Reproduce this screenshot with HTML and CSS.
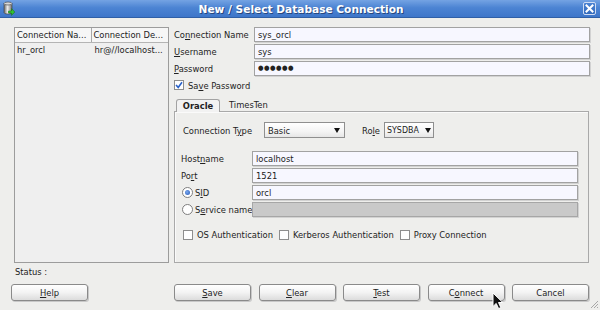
FILE: index.html
```html
<!DOCTYPE html>
<html>
<head>
<meta charset="utf-8">
<link rel="stylesheet" href="styles.css">
</head>
<body>
<div class="win">
  <div class="titlebar">
    <svg class="ticon" width="12" height="15" viewBox="0 0 12 15">
      <defs>
        <linearGradient id="cyl" x1="0" x2="1" y1="0" y2="0">
          <stop offset="0" stop-color="#6a6a6a"/>
          <stop offset="0.45" stop-color="#ececec"/>
          <stop offset="1" stop-color="#6e6e6e"/>
        </linearGradient>
      </defs>
      <path d="M1 2.5 V11.5 A4 1.5 0 0 0 9 11.5 V2.5 Z" fill="url(#cyl)" stroke="#3a3a3a" stroke-width="0.6"/>
      <ellipse cx="5" cy="2.5" rx="4" ry="1.5" fill="#d8d8d8" stroke="#3a3a3a" stroke-width="0.6"/>
      <path d="M5.5 10 H8.5 V7.6 L11.8 11 L8.5 14.4 V12 H5.5 Z" fill="#35c235" stroke="#0c6a0c" stroke-width="0.5"/>
    </svg>
    <div class="title">New / Select Database Connection</div>
    <div class="close">
      <svg width="9" height="9" viewBox="0 0 9 9"><path d="M1.5 1.5 L7.5 7.5 M7.5 1.5 L1.5 7.5" stroke="#fff" stroke-width="2" stroke-linecap="square"/></svg>
    </div>
  </div>

  <div class="content">
    <div class="main">
      <div class="list">
        <div class="lhead">
          <div class="lc c1">Connection Na...</div>
          <div class="lc c2">Connection De...</div>
        </div>
        <div class="lrow">
          <div class="lc c1">hr_orcl</div>
          <div class="lc c2">hr@//localhost...</div>
        </div>
      </div>

      <div class="form">
        <div class="frow"><span class="flabel">Co<u>n</u>nection Name</span><div class="input">sys_orcl</div></div>
        <div class="frow"><span class="flabel"><u>U</u>sername</span><div class="input">sys</div></div>
        <div class="frow"><span class="flabel"><u>P</u>assword</span><div class="input pw">&#9679;&#9679;&#9679;&#9679;&#9679;&#9679;</div></div>
        <div class="saverow">
          <span class="cb checked"><svg width="8" height="8" viewBox="0 0 8 8"><path d="M1 4 L3.2 6.4 L7 1.2" fill="none" stroke="#2a62c8" stroke-width="1.6"/></svg></span>
          <span>Sa<u>v</u>e Password</span>
        </div>
        <div class="tabs">
          <div class="tab active">Oracle</div>
          <div class="tab">TimesTen</div>
        </div>
        <div class="panel">
          <div class="typerow">
            <span class="typelabel">Connection T<u>y</u>pe</span>
            <div class="select sel-basic"><span>Basic</span><span class="tri"></span></div>
            <span class="rolelabel">Ro<u>l</u>e</span>
            <div class="select sel-role"><span>SYSDBA</span><span class="tri"></span></div>
          </div>
          <div class="hostgrid">
            <div class="hrow"><span class="hlabel">Host<u>n</u>ame</span><div class="input hin">localhost</div></div>
            <div class="hrow"><span class="hlabel">Po<u>r</u>t</span><div class="input hin">1521</div></div>
            <div class="hrow"><span class="hlabel rlabel"><span class="radio on"></span><span>S<u>I</u>D</span></span><div class="input hin">orcl</div></div>
            <div class="hrow"><span class="hlabel rlabel"><span class="radio"></span><span>S<u>e</u>rvice name</span></span><div class="input hin disabled"></div></div>
          </div>
          <div class="authrow">
            <span class="cb"></span><span class="atext">OS Authentication</span>
            <span class="cb"></span><span class="atext">Kerberos Authentication</span>
            <span class="cb"></span><span class="atext">Proxy Connection</span>
          </div>
        </div>
      </div>
    </div>

    <div class="status">Status :</div>

    <div class="buttons">
      <div class="btn"><span><u>H</u>elp</span></div>
      <div class="btngroup">
        <div class="btn"><span><u>S</u>ave</span></div>
        <div class="btn"><span><u>C</u>lear</span></div>
        <div class="btn"><span><u>T</u>est</span></div>
        <div class="btn"><span>C<u>o</u>nnect</span></div>
        <div class="btn"><span>Cancel</span></div>
      </div>
    </div>
  </div>

  <svg class="cursor" width="13" height="18" viewBox="0 0 13 18">
    <path d="M1 1 L1 14.5 L4.2 11.4 L6.6 16.6 L8.8 15.6 L6.5 10.5 L10.8 10.5 Z" fill="#111" stroke="#fff" stroke-width="1"/>
  </svg>
  <svg class="grip" width="10" height="10" viewBox="0 0 10 10">
    <path d="M9 2 L2 9 M9 5 L5 9 M9 8 L8 9" stroke="#a8a8a8" stroke-width="1"/>
  </svg>
</div>
</body>
</html>
```

FILE: styles.css
```css
* { box-sizing: border-box; }
html, body { margin: 0; padding: 0; }
body {
  width: 600px;
  height: 310px;
  overflow: hidden;
  background: #eeeeec;
  font-family: "DejaVu Sans Condensed", "Liberation Sans", sans-serif;
  font-size: 9.3px;
  color: #222;
}
u { text-decoration: underline; text-underline-offset: 1px; }

.win {
  position: relative;
  width: 600px;
  height: 310px;
  display: flex;
  flex-direction: column;
}

/* title bar */
.titlebar {
  height: 18px;
  flex: none;
  display: flex;
  align-items: center;
  background: linear-gradient(#74a3e3, #4c84d3 45%, #3e76c9);
  border-bottom: 1px solid #2f5fa6;
}
.ticon { margin-left: 3px; flex: none; }
.title {
  flex: 1;
  text-align: center;
  color: #fff;
  font-family: "DejaVu Sans", sans-serif;
  font-weight: bold;
  font-size: 10.6px;
  text-shadow: 1px 1px 0 #27477e;
  padding-left: 4px;
}
.close {
  flex: none;
  width: 13px;
  height: 13px;
  margin-right: 4px;
  border: 1px solid #cfdcf3;
  border-radius: 2px;
  background: linear-gradient(#4a82d2, #336bbd);
  display: flex;
  align-items: center;
  justify-content: center;
}

/* content */
.content { flex: 1; display: flex; flex-direction: column; }
.main {
  display: flex;
  height: 236px;
  margin-top: 9px;
}
.list {
  margin-left: 14px;
  width: 155px;
  border: 1px solid #9c9c9c;
  background: #efefef;
}
.lhead {
  display: flex;
  height: 15px;
  background: #f6f6f6;
  border-bottom: 1px solid #b4b4b4;
}
.lrow { display: flex; height: 14px; }
.lc {
  width: 77px;
  padding-left: 2px;
  white-space: nowrap;
  overflow: hidden;
  line-height: 14px;
}
.lhead .c1 { border-right: 1px solid #a8a8a8; }
.lrow .c2 { padding-left: 3px; }

.form {
  margin-left: 4px;
  width: 417px;
  display: flex;
  flex-direction: column;
}
.frow {
  display: flex;
  align-items: center;
  height: 15px;
  margin-bottom: 2px;
}
.flabel { width: 81px; padding-left: 1px; white-space: nowrap; }
.input {
  flex: 1;
  height: 15px;
  background: #f7f7ff;
  border: 1px solid #a2a2a2;
  box-shadow: 1px 1px 0 #d2d2d2;
  padding-left: 3px;
  line-height: 13px;
  white-space: nowrap;
}
.pw { font-size: 7px; letter-spacing: 0.5px; line-height: 13px; }

.saverow {
  display: flex;
  align-items: center;
  gap: 4px;
  height: 12px;
  margin-top: 1px;
  padding-left: 1px;
}
.cb {
  flex: none;
  width: 10px;
  height: 10px;
  border: 1px solid #8e8e8e;
  background: #fff;
  display: flex;
  align-items: center;
  justify-content: center;
}

/* tabs */
.tabs {
  display: flex;
  height: 12px;
  margin-top: 8px;
  padding-left: 3px;
  position: relative;
  z-index: 1;
}
.tab { padding: 0 9px; line-height: 12px; }
.tab.active {
  width: 44px;
  height: 13px;
  padding: 0;
  text-align: center;
  font-weight: bold;
  border: 1px solid #a2a2a2;
  border-bottom: none;
  border-radius: 3px 3px 0 0;
  background: #f2f2f2;
  line-height: 11px;
}
.panel {
  flex: 1;
  margin: 0 1px 0 1px;
  border: 1px solid #a9a9a9;
  box-shadow: inset 1px 1px 0 #fafafa;
  padding: 10px 0 0 8px;
}
.typerow { display: flex; align-items: center; height: 16px; }
.typelabel { width: 81px; white-space: nowrap; }
.select {
  height: 16px;
  border: 1px solid #8f8f8f;
  background: linear-gradient(#ffffff, #f4f4f4 60%, #e6e6e6);
  display: flex;
  align-items: center;
  justify-content: space-between;
  padding: 0 4px 0 3px;
}
.sel-basic { width: 81px; }
.sel-role { width: 50px; padding: 0 2px 0 2px; font-size: 8.8px; }
.tri {
  width: 0;
  height: 0;
  border-left: 3.5px solid transparent;
  border-right: 3.5px solid transparent;
  border-top: 5px solid #111;
}
.rolelabel { margin: 0 4px 0 17px; }

.hostgrid { margin-top: 13px; margin-left: -2px; }
.hrow {
  display: flex;
  align-items: center;
  height: 15px;
  margin-bottom: 2px;
}
.hlabel { width: 71px; white-space: nowrap; }
.rlabel { display: flex; align-items: center; gap: 2px; }
.hin { flex: none; width: 326px; }
.disabled { background: #c9c9c9; border-color: #a6a6a6; }
.radio {
  flex: none;
  width: 11px;
  height: 11px;
  border-radius: 50%;
  border: 1px solid #7e7e7e;
  background: #fff;
  display: inline-flex;
  align-items: center;
  justify-content: center;
  margin-left: 1px;
}
.radio.on::after {
  content: "";
  width: 5px;
  height: 5px;
  border-radius: 50%;
  background: radial-gradient(circle at 40% 40%, #7aa8ee, #2458b8);
}

.authrow {
  display: flex;
  align-items: center;
  height: 11px;
  margin-top: 12px;
}
.atext { margin: 0 6px 0 4px; white-space: nowrap; }

/* bottom */
.status {
  margin: 3px 0 0 15px;
  height: 12px;
  line-height: 12px;
}
.buttons {
  display: flex;
  height: 17px;
  margin-top: 6px;
  padding: 0 11px;
}
.btngroup { margin-left: auto; display: flex; gap: 7.5px; }
.btn {
  width: 77px;
  height: 17px;
  border: 1px solid #8a8a8a;
  border-radius: 3px;
  background: linear-gradient(#ffffff, #f3f3f3 50%, #dcdcdc);
  box-shadow: 1px 1px 0 #c8c8c8;
  display: flex;
  align-items: center;
  justify-content: center;
}

.cursor { position: absolute; left: 492px; top: 292px; }
.grip { position: absolute; right: 1px; bottom: 1px; }
```
